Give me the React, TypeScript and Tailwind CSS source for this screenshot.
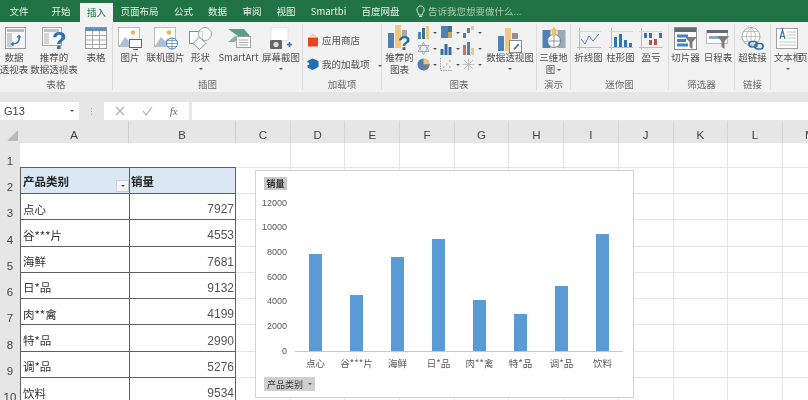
import type { ReactNode } from "react";

const sales = [
  { name: "点心", value: 7927 },
  { name: "谷***片", value: 4553 },
  { name: "海鲜", value: 7681 },
  { name: "日*品", value: 9132 },
  { name: "肉**禽", value: 4199 },
  { name: "特*品", value: 2990 },
  { name: "调*品", value: 5276 },
  { name: "饮料", value: 9534 },
];

const columns = ["C", "D", "E", "F", "G", "H", "I", "J", "K", "L", "M"];
const ticks = [12000, 10000, 8000, 6000, 4000, 2000, 0];

const Caret = () => (
  <span className="inline-block h-0 w-0 border-x-[2px] border-t-[2px] border-x-transparent border-t-[#555] align-middle" />
);

const Svg = ({ children, w = 24, h = 23 }: { children: ReactNode; w?: number; h?: number }) => (
  <svg width={w} height={h} viewBox={`0 0 ${w} ${h}`} className="block">
    {children}
  </svg>
);

// picture with mountains, used by 图片 and 联机图片
const PictureBase = () => (
  <>
    <rect x="0.5" y="0.5" width="21" height="19" fill="#fff" stroke="#bdbdbd" />
    <circle cx="15" cy="5.5" r="2.2" fill="#f0b45a" />
    <path d="M1 19 L7 10 L11 14 L14 11 L21 19 Z" fill="#a9c0dc" />
  </>
);

const PivotIcon = () => (
  <Svg>
    <rect x="3.5" y="0.5" width="20" height="21" fill="#f7f7f7" stroke="#9a9a9a" />
    <rect x="5" y="2" width="17" height="3" fill="#b9b9b9" />
    <rect x="5" y="6" width="5" height="14" fill="#cfcfcf" />
    <path d="M17 9 C18 15 15 17 10 17" fill="none" stroke="#2f75b5" strokeWidth="1.6" />
    <path d="M14.5 10.5 L17 7.5 L19.5 10.5 Z M11.5 14.5 L8.5 17 L11.5 19.5 Z" fill="#2f75b5" />
  </Svg>
);

const RecommendPivotIcon = () => (
  <Svg>
    <rect x="0.5" y="0.5" width="19" height="18" fill="#f7f7f7" stroke="#a8a8a8" />
    <rect x="2" y="2" width="15" height="3" fill="#c4c4c4" />
    <rect x="2" y="6" width="5" height="11" fill="#d6d6d6" />
    <text x="10" y="22" fontSize="24" fontWeight="700" fill="#2f6fa8" fontFamily="Liberation Sans">
      ?
    </text>
  </Svg>
);

const TableIcon = () => (
  <Svg>
    <rect x="1.5" y="0.5" width="21" height="21" fill="#fff" stroke="#9a9a9a" />
    <rect x="1.5" y="0.5" width="21" height="3.5" fill="#5f8fc0" />
    <path d="M1.5 8.5H22.5M1.5 13H22.5M1.5 17.5H22.5M8.5 4V21.5M15.5 4V21.5" stroke="#a8a8a8" fill="none" />
  </Svg>
);

const PictureIcon = () => (
  <Svg>
    <PictureBase />
    <rect x="11.5" y="12.5" width="12" height="8" fill="#fff" stroke="#4a6d8c" />
    <path d="M15 22.5H20" stroke="#4a6d8c" />
  </Svg>
);

const OnlinePictureIcon = () => (
  <Svg>
    <PictureBase />
    <circle cx="18" cy="16.5" r="5.5" fill="#fff" stroke="#4a80b4" />
    <path d="M12.5 16.5H23.5M18 11V22M14 13.5H22M14 19.5H22" stroke="#4a80b4" strokeWidth="0.7" fill="none" />
  </Svg>
);

const ShapesIcon = () => (
  <Svg>
    <rect x="0.5" y="4.5" width="13" height="12" fill="#fff" stroke="#8b8b8b" />
    <circle cx="16" cy="7" r="6.5" fill="#fff" fillOpacity="0.6" stroke="#8fa8c4" />
    <path d="M10.5 10 L17 16.5 L10.5 22.5 L4 16.5 Z" fill="#fff" stroke="#8b8b8b" />
  </Svg>
);

const SmartArtIcon = () => (
  <Svg>
    <path d="M1 2 H17 L23 9 H11 Z" fill="#5a9d8a" />
    <path d="M1 15 L8 9 H11 L8 15 Z" fill="#7db7a7" />
    <rect x="9.5" y="9.5" width="14" height="11" fill="#fff" stroke="#a0a0a0" />
    <path d="M12 13H21M12 15.5H21M12 18H21" stroke="#a8a8a8" />
  </Svg>
);

const ScreenshotIcon = () => (
  <Svg>
    <rect x="2" y="0.5" width="17" height="13" fill="#fff" stroke="#e4e4e4" />
    <rect x="1" y="13" width="12" height="9" rx="1" fill="#666" />
    <circle cx="7" cy="17.5" r="2.6" fill="#ddd" />
    <path d="M18 17.5H23M20.5 15V20" stroke="#2f75b5" strokeWidth="1.6" />
  </Svg>
);

const StoreIcon = () => (
  <svg width="12" height="13" viewBox="0 0 12 13" className="block">
    <path d="M1 3.5H11V12.5H1Z" fill="#e8451c" />
    <path d="M3.5 4V2.5C3.5 0.5 8.5 0.5 8.5 2.5V4" fill="none" stroke="#f3a38b" strokeWidth="1" />
  </svg>
);

const AddinIcon = () => (
  <svg width="12" height="13" viewBox="0 0 12 13" className="block">
    <path d="M5.5 0.5 L11.5 3 V9 L5.5 12 L0.5 9.5 V7 C3 7.5 3 4 0.5 4.5 V3 Z" fill="#1f6fb5" />
  </svg>
);

const RecommendChartIcon = () => (
  <Svg w={26} h={26}>
    <rect x="1" y="9" width="6" height="15" fill="#4f81b5" />
    <rect x="8" y="1" width="6" height="23" fill="#efc77f" />
    <rect x="15" y="6" width="5" height="8" fill="#a9a9a9" />
    <text x="11" y="26" fontSize="21" fontWeight="700" fill="#2f6fa8" fontFamily="Liberation Sans">
      ?
    </text>
  </Svg>
);

const PivotChartIcon = () => (
  <Svg w={26} h={26}>
    <rect x="1" y="9" width="6" height="15" fill="#4f81b5" />
    <rect x="8" y="1" width="6" height="23" fill="#efc77f" />
    <rect x="15" y="6" width="6" height="6" fill="#8f8f8f" />
    <rect x="12.5" y="13.5" width="12" height="12" fill="#fff" stroke="#8b8b8b" />
    <path d="M16 22 L21 16.5 L22.5 18 L17.5 23 Z" fill="#4f81b5" />
  </Svg>
);

const MapIcon = () => (
  <Svg>
    <rect x="0.5" y="3" width="8" height="18" fill="#4f81b5" />
    <rect x="15.5" y="3" width="8" height="18" fill="#9aa9b8" />
    <circle cx="12" cy="14" r="6.5" fill="#fff" stroke="#6e7f90" />
    <path d="M5.5 14H18.5M12 7.5V20.5" stroke="#6e7f90" strokeWidth="0.8" />
    <path d="M12 0 L15 3 L13.5 8 H10.5 L9 3 Z" fill="#f2c15a" />
  </Svg>
);

const SparkFrame = ({ children }: { children: ReactNode }) => (
  <Svg>
    <path d="M0 20.5H24M2.5 1V23" stroke="#bcbcbc" fill="none" />
    <path d="M0 4.5H24" stroke="#d8d8d8" fill="none" />
    {children}
  </Svg>
);

const SlicerIcon = () => (
  <Svg>
    <rect x="0.5" y="0.5" width="22" height="22" fill="#fff" stroke="#8b8b8b" />
    <rect x="1" y="1" width="21" height="4" fill="#5f6d7a" />
    <rect x="3" y="7.5" width="11" height="3" fill="#3f86c6" />
    <rect x="3" y="12" width="9" height="3" fill="#3f86c6" />
    <rect x="3" y="16.5" width="11" height="3" fill="#3f86c6" />
    <path d="M11 10 H23 L18.5 15 V22 L15.5 20 V15 Z" fill="#7d7d7d" />
  </Svg>
);

const TimelineIcon = () => (
  <Svg>
    <rect x="0.5" y="3.5" width="21" height="13" fill="#fff" stroke="#bdbdbd" />
    <rect x="1" y="3" width="21" height="3" fill="#5f6d7a" />
    <rect x="3" y="9" width="12" height="3" fill="#8fa8c4" />
    <path d="M11 9 H23 L18.5 14.5 V22 L15.5 20 V14.5 Z" fill="#7d7d7d" />
  </Svg>
);

const LinkIcon = () => (
  <Svg>
    <circle cx="10" cy="9.5" r="9" fill="#fff" stroke="#a9a9a9" />
    <path d="M1 9.5H19M10 0.5V18.5M3 4.5H17M3 14.5H17M10 0.5C4 6 4 13 10 18.5M10 0.5C16 6 16 13 10 18.5" stroke="#a9a9a9" strokeWidth="0.7" fill="none" />
    <rect x="8" y="14.5" width="8" height="5.5" rx="2.7" fill="none" stroke="#2f6fa8" strokeWidth="1.7" />
    <rect x="14" y="16.5" width="8" height="5.5" rx="2.7" fill="none" stroke="#2f6fa8" strokeWidth="1.7" />
  </Svg>
);

const TextBoxIcon = () => (
  <Svg>
    <rect x="0.5" y="1.5" width="21" height="20" fill="#fff" stroke="#a0a0a0" />
    <path d="M9 12 L6.5 3 L4 12 M4.5 9.5H8.5" stroke="#2f75b5" strokeWidth="1.2" fill="none" />
    <path d="M11 5H20M11 8H20M11 11H20M3 15H20M3 18H20" stroke="#c4c4c4" fill="none" />
  </Svg>
);

const miniBars = (bars: [number, number, number, string][]) => (
  <svg width="13" height="13" viewBox="0 0 13 13" className="block">
    {bars.map(([x, y, h, c], i) => (
      <rect key={i} x={x} y={y} width="3" height={h} fill={c} />
    ))}
  </svg>
);

const chartMinis: ReactNode[] = [
  miniBars([[1, 6, 7, "#4f81b5"], [5, 2, 11, "#3f6d9c"], [9, 0, 13, "#efc77f"]]),
  <svg width="13" height="13" viewBox="0 0 13 13" className="block">
    <rect x="1" y="0" width="7" height="12" fill="#4f81b5" />
    <rect x="8" y="0" width="4" height="6" fill="#3f6d9c" />
    <rect x="8" y="6" width="4" height="6" fill="#c9a662" />
  </svg>,
  miniBars([[1, 7, 5, "#4f81b5"], [5, 2, 5, "#7d7d7d"], [9, 0, 4, "#efc77f"]]),
  <svg width="13" height="13" viewBox="0 0 13 13" className="block">
    <path d="M6.5 0.5 L12 9.5 H1 Z M6.5 12.5 L1 3.5 H12 Z" fill="none" stroke="#8fa8c4" strokeWidth="0.9" />
  </svg>,
  miniBars([[0.5, 7, 6, "#2f6fa8"], [4.5, 2, 11, "#2f6fa8"], [8.5, 5, 8, "#2f6fa8"]]),
  miniBars([[1, 3, 10, "#c07c4a"], [5, 0, 13, "#4f81b5"], [9, 6, 7, "#efc77f"]]),
  <svg width="13" height="13" viewBox="0 0 13 13" className="block">
    <circle cx="6.5" cy="6.5" r="6" fill="#4f81b5" />
    <path d="M6.5 6.5V0.5A6 6 0 0 1 12.5 6.5Z" fill="#efc77f" />
    <path d="M6.5 6.5H12.5A6 6 0 0 1 6.5 12.5Z" fill="#7d7d7d" />
  </svg>,
  <svg width="13" height="13" viewBox="0 0 13 13" className="block">
    <path d="M0.5 0V12.5H13" stroke="#a9a9a9" fill="none" strokeDasharray="1.5 1" />
    <path d="M3 9h1.5M6 6h1.5M9 3h1.5M9 9h1.5" stroke="#6e9ac4" />
  </svg>,
  <svg width="13" height="13" viewBox="0 0 13 13" className="block">
    <path d="M6.5 0.5V12.5M0.5 6.5H12.5M2 2L11 11M11 2L2 11" stroke="#b4b4b4" strokeWidth="0.8" />
  </svg>,
];

const Tool = ({
  className,
  icon,
  lines,
  caret,
}: {
  className: string;
  icon?: ReactNode;
  lines: string[];
  caret?: "second" | "inline";
}) => (
  <div className={`flex shrink-0 flex-col items-center pt-[5px] ${className}`}>
    <div className="mb-[1px] h-[23px]">{icon}</div>
    {lines.map((line, i) => (
      <div key={line} className="whitespace-nowrap leading-[12px]">
        {line}
        {caret === "inline" && i === lines.length - 1 && (
          <span className="ml-[2px]">
            <Caret />
          </span>
        )}
      </div>
    ))}
    {caret === "second" && (
      <div className="flex h-[12px] items-center">
        <Caret />
      </div>
    )}
  </div>
);

const Group = ({ className, label, children }: { className: string; label: string; children: ReactNode }) => (
  <div className={`my-[2px] flex shrink-0 flex-col border-r border-[#dcdcdc] ${className}`}>
    <div className="-mt-[2px] flex h-[59px] justify-start">{children}</div>
    <div className="text-center leading-[12px] text-[#6a6a6a]">{label}</div>
  </div>
);

const Tabs = () => (
  <div className="flex h-[22px] items-end bg-[#217346] text-[9.5px] text-[#e9f2ec]">
    <div className="flex h-[22px] w-[38px] items-center justify-center">文件</div>
    <div className="flex h-[22px] w-[42px] items-center justify-center pl-[4px]">开始</div>
    <div className="flex h-[19px] w-[33px] items-center justify-center bg-[#f2f2f2] text-[#217346]">插入</div>
    <div className="flex h-[22px] w-[53px] items-center justify-center">页面布局</div>
    <div className="flex h-[22px] w-[35px] items-center justify-center">公式</div>
    <div className="flex h-[22px] w-[33px] items-center justify-center">数据</div>
    <div className="flex h-[22px] w-[36px] items-center justify-center">审阅</div>
    <div className="flex h-[22px] w-[32px] items-center justify-center">视图</div>
    <div className="flex h-[22px] w-[53px] items-center justify-center">Smartbi</div>
    <div className="flex h-[22px] w-[51px] items-center justify-center">百度网盘</div>
    <div className="flex h-[22px] items-center pl-[10px] text-[#a5cbb5]">
      <svg width="9" height="13" viewBox="0 0 9 13" className="mr-[3px]">
        <path d="M2.5 8.5C-0.5 5.5 1 1 4.5 1S9.5 5.5 6.5 8.5V10H2.5ZM3 11.5H6" fill="none" stroke="#cfe3d8" />
      </svg>
      告诉我您想要做什么...
    </div>
  </div>
);

const Ribbon = () => (
  <div className="flex h-[70px] overflow-hidden bg-[#f2f2f2] text-[9.5px] text-[#505050]">
    <Group className="w-[113px]" label="表格">
      <Tool className="w-[28px]" icon={<PivotIcon />} lines={["数据", "透视表"]} />
      <Tool className="w-[52px]" icon={<RecommendPivotIcon />} lines={["推荐的", "数据透视表"]} />
      <Tool className="w-[32px]" icon={<TableIcon />} lines={["表格"]} />
    </Group>
    <Group className="w-[190px]" label="插图">
      <Tool className="w-[34px]" icon={<PictureIcon />} lines={["图片"]} />
      <Tool className="w-[37px]" icon={<OnlinePictureIcon />} lines={["联机图片"]} />
      <Tool className="w-[33px]" icon={<ShapesIcon />} lines={["形状"]} caret="second" />
      <Tool className="w-[43px]" icon={<SmartArtIcon />} lines={["SmartArt"]} />
      <Tool className="w-[42px]" icon={<ScreenshotIcon />} lines={["屏幕截图"]} caret="second" />
    </Group>
    <Group className="w-[79px]" label="加载项">
      <div className="flex flex-col gap-[10px] whitespace-nowrap pl-[4px] pt-[11px]">
        <div className="flex items-center gap-[3px]">
          <StoreIcon />
          应用商店
        </div>
        <div className="flex items-center gap-[3px]">
          <AddinIcon />
          我的加载项
          <span className="ml-[5px]">
            <Caret />
          </span>
        </div>
      </div>
    </Group>
    <Group className="w-[155px]" label="图表">
      <div className="flex w-[35px] shrink-0 flex-col items-center pt-[2px]">
        <div className="h-[27px]">
          <RecommendChartIcon />
        </div>
        <div className="leading-[12px]">推荐的</div>
        <div className="leading-[12px]">图表</div>
      </div>
      <div className="grid h-fit w-[68px] shrink-0 grid-cols-3 gap-y-[3px] pt-[4px]">
        {chartMinis.map((mini, i) => (
          <div key={i} className="flex items-center gap-[3px]">
            {mini}
            <Caret />
          </div>
        ))}
      </div>
      <Tool className="w-[50px]" icon={<PivotChartIcon />} lines={["数据透视图"]} caret="second" />
    </Group>
    <Group className="w-[34px]" label="演示">
      <Tool className="w-[33px]" icon={<MapIcon />} lines={["三维地", "图"]} caret="inline" />
    </Group>
    <Group className="w-[98px]" label="迷你图">
      <Tool
        className="w-[35px]"
        icon={
          <SparkFrame>
            <path d="M4 12 L8 17 L12 9 L16 14 L22 7" fill="none" stroke="#4f81b5" />
          </SparkFrame>
        }
        lines={["折线图"]}
      />
      <Tool
        className="w-[29px]"
        icon={
          <SparkFrame>
            <path d="M5 10h3v10H5zM10 7h3v13h-3zM15 13h3v7h-3zM20 16h3v4h-3z" fill="#2f75b5" />
          </SparkFrame>
        }
        lines={["柱形图"]}
      />
      <Tool
        className="w-[32px]"
        icon={
          <SparkFrame>
            <path d="M5 6h3v5H5zM10 6h3v5h-3zM20 6h3v5h-3z" fill="#2f75b5" />
            <path d="M15 12h3v6h-3zM10 13h3v5h-3z" fill="#c0504d" />
          </SparkFrame>
        }
        lines={["盈亏"]}
      />
    </Group>
    <Group className="w-[66px]" label="筛选器">
      <Tool className="w-[33px]" icon={<SlicerIcon />} lines={["切片器"]} />
      <Tool className="w-[32px]" icon={<TimelineIcon />} lines={["日程表"]} />
    </Group>
    <Group className="w-[36px]" label="链接">
      <Tool className="w-[35px]" icon={<LinkIcon />} lines={["超链接"]} />
    </Group>
    <div className="flex w-[37px] shrink-0">
      <Tool className="w-[34px]" icon={<TextBoxIcon />} lines={["文本框"]} caret="second" />
      <Tool className="w-[34px]" lines={["页眉和页脚"]} />
    </div>
  </div>
);

const FormulaBar = () => (
  <div className="flex h-[29px] items-end bg-[#e6e6e6] pb-[1px]">
    <div className="flex h-[18px] w-[79px] items-center justify-between bg-white pl-[4px] pr-[5px] text-[11px] text-[#444] [font-family:'Liberation_Sans',sans-serif]">
      G13
      <Caret />
    </div>
    <div className="flex h-[18px] w-[25px] items-center justify-center">
      <span className="flex flex-col gap-[2px]">
        <span className="block h-[1px] w-[1px] bg-[#aaa]" />
        <span className="block h-[1px] w-[1px] bg-[#aaa]" />
        <span className="block h-[1px] w-[1px] bg-[#aaa]" />
      </span>
    </div>
    <div className="flex h-[18px] w-[85px] items-center justify-around bg-white px-[3px]">
      <svg width="10" height="10" viewBox="0 0 10 10">
        <path d="M1 1L9 9M9 1L1 9" stroke="#b0b0b0" strokeWidth="1.2" />
      </svg>
      <svg width="11" height="10" viewBox="0 0 11 10">
        <path d="M1 5L4 9L10 1" stroke="#b0b0b0" strokeWidth="1.2" fill="none" />
      </svg>
      <span className="text-[11px] italic text-[#666] [font-family:'Liberation_Serif',serif]">fx</span>
    </div>
    <div className="ml-[3px] h-[18px] flex-1 bg-white" />
  </div>
);

const BlankCells = () => (
  <>
    {columns.map((c) => (
      <div key={c} className="h-full w-[54.7px] shrink-0 border-b border-r border-[#e4e4e4]" />
    ))}
  </>
);

const RowHead = ({ n }: { n: number }) => (
  <div className="flex h-full w-[20px] shrink-0 items-end justify-center bg-[#e6e6e6] text-[11.5px] leading-[13px] text-[#444] [font-family:'Liberation_Sans',sans-serif]">
    {n}
  </div>
);

const Sheet = () => (
  <div className="relative flex-1 overflow-hidden bg-white text-[11.5px] text-[#333]">
    <div className="flex h-[22px] bg-[#e6e6e6] text-[#444] [font-family:'Liberation_Sans',sans-serif]">
      <div className="w-[20px] shrink-0">
        <svg width="12" height="12" viewBox="0 0 12 12" className="ml-[7px] mt-[9px]">
          <path d="M11 0V11H0Z" fill="#b9b9b9" />
        </svg>
      </div>
      <div className="flex w-[109px] shrink-0 items-center justify-center border-r border-[#cfcfcf] pt-[7px]">A</div>
      <div className="flex w-[107px] shrink-0 items-center justify-center border-r border-[#cfcfcf] pt-[7px]">B</div>
      {columns.map((c) => (
        <div key={c} className="flex w-[54.7px] shrink-0 items-center justify-center border-r border-[#d6d6d6] pt-[7px]">
          {c}
        </div>
      ))}
    </div>

    <div className="flex h-[25px]">
      <RowHead n={1} />
      <div className="h-full w-[216px] shrink-0 border-b-[1.5px] border-[#5f5f5f]" />
      <BlankCells />
    </div>

    <div className="flex h-[26px]">
      <RowHead n={2} />
      <div className="relative flex h-full w-[109px] shrink-0 items-center border-b-[1.5px] border-l-[1.5px] border-[#5f5f5f] bg-[#dae8f5] pl-[2px] pt-[2px] font-semibold text-[#222]">
        产品类别
        <div className="absolute bottom-[1px] right-0 flex h-[12px] w-[13px] items-center justify-center border border-[#cfcfcf] bg-[#f4f4f4]">
          <Caret />
        </div>
      </div>
      <div className="flex h-full w-[107px] shrink-0 items-center border-x-[1.5px] border-b-[1.5px] border-[#5f5f5f] bg-[#dae8f5] pl-[1px] pt-[2px] font-semibold text-[#222]">
        销量
      </div>
      <BlankCells />
    </div>

    {sales.map((row, i) => (
      <div key={row.name} className="flex h-[26.3px]">
        <RowHead n={i + 3} />
        <div className="flex h-full w-[109px] shrink-0 items-center border-b-[1.5px] border-l-[1.5px] border-[#5f5f5f] pl-[2px] pt-[5px]">
          {row.name}
        </div>
        <div className="flex h-full w-[107px] shrink-0 items-center justify-end border-x-[1.5px] border-b-[1.5px] border-[#5f5f5f] pr-[1px] pt-[5px] text-[12px] text-[#555] [font-family:'Liberation_Sans',sans-serif]">
          {row.value}
        </div>
        <BlankCells />
      </div>
    ))}

    <SalesChart />
  </div>
);

const SalesChart = () => (
  <div className="absolute left-[255px] top-[49px] h-[228px] w-[379px] border border-[#d4d4d4] bg-white pl-[8px] pt-[6px] text-[9.5px] text-[#595959]">
    <div className="flex h-[13px] w-[23px] items-center justify-center bg-[#c8c8c8] text-[9px] font-semibold text-[#333]">
      销量
    </div>
    <div className="mt-[1px] flex">
      <div className="w-[23px] shrink-0">
        {ticks.map((t) => (
          <div
            key={t}
            className="flex h-[24.67px] items-center justify-end text-[9px] [font-family:'Liberation_Sans',sans-serif]"
          >
            {t}
          </div>
        ))}
      </div>
      <div className="ml-[8px] w-[328px] shrink-0 pt-[12.3px]">
        <div className="flex h-[149px] items-end border-b border-[#c8c8c8]">
          {sales.map((s) => (
            <div key={s.name} className="flex flex-1 justify-center">
              <div className="w-[12.5px] bg-[#5b9bd5]" style={{ height: (s.value / 12000) * 148 }} />
            </div>
          ))}
        </div>
        <div className="mt-[5px] flex">
          {sales.map((s) => (
            <div key={s.name} className="flex-1 text-center leading-[12px]">
              {s.name}
            </div>
          ))}
        </div>
      </div>
    </div>
    <div className="mt-[8px] flex h-[14px] w-[51px] items-center justify-center gap-[5px] bg-[#cfcfcf] text-[9px] text-[#333]">
      产品类别
      <Caret />
    </div>
  </div>
);

export default function App() {
  return (
    <div className="flex h-[400px] w-[808px] flex-col overflow-hidden bg-white blur-[0.3px] [font-family:'Noto_Sans_CJK_SC','Liberation_Sans',sans-serif]">
      <Tabs />
      <Ribbon />
      <FormulaBar />
      <Sheet />
    </div>
  );
}
